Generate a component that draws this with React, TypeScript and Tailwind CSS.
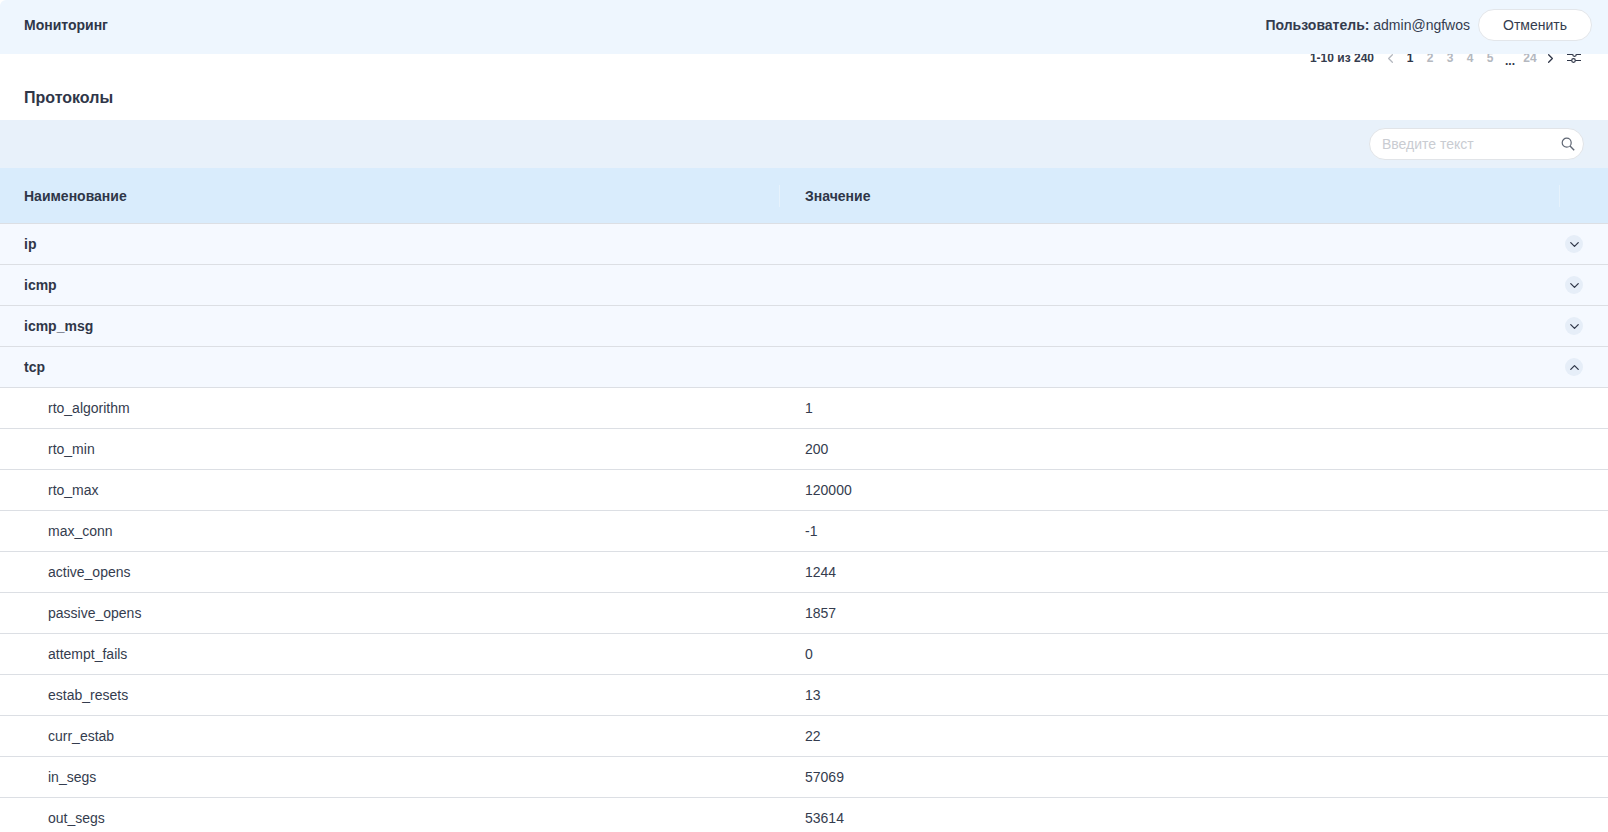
import { ChevronDown, ChevronLeft, ChevronRight, ChevronUp } from "lucide-react";

const groups = ["ip", "icmp", "icmp_msg"];

const tcpRows = [
  ["rto_algorithm", "1"],
  ["rto_min", "200"],
  ["rto_max", "120000"],
  ["max_conn", "-1"],
  ["active_opens", "1244"],
  ["passive_opens", "1857"],
  ["attempt_fails", "0"],
  ["estab_resets", "13"],
  ["curr_estab", "22"],
  ["in_segs", "57069"],
  ["out_segs", "53614"],
];

const GroupRow = ({ name, open }: { name: string; open?: boolean }) => (
  <div className="flex h-[41px] items-center justify-between border-b border-[#dcdfe4] bg-[#f5f9ff] pl-6 pr-[25px]">
    <span className="text-sm font-bold text-[#2f3648]">{name}</span>
    <span className="flex h-[18px] w-[18px] items-center justify-center rounded-full bg-[#e6eef8] text-[#2f3648]">
      {open ? <ChevronUp size={15} strokeWidth={2} /> : <ChevronDown size={15} strokeWidth={2} />}
    </span>
  </div>
);

const App = () => {
  return (
    <div className="h-[832px] w-[1608px] overflow-hidden bg-white font-['Liberation_Sans',sans-serif] text-sm text-[#343c4e]">
      <header className="relative z-10 flex h-[54px] items-center justify-between rounded-tl-md bg-[#eef6fe] pb-[4px] pl-6 pr-4">
        <span className="text-sm font-bold text-[#2f3648]">Мониторинг</span>
        <div className="flex items-center gap-2">
          <span>
            <b>Пользователь:</b> admin@ngfwos
          </span>
          <button className="h-[32px] w-[114px] rounded-full border border-[#e3e6ea] bg-white text-sm">Отменить</button>
        </div>
      </header>

      <div className="flex h-[8px] items-center justify-end pr-[27px] text-xs font-bold">
        <span className="mr-[6px]">1-10 из 240</span>
        <span className="flex w-[20px] justify-center">
          <ChevronLeft size={15} className="text-[#b4b8bf]" />
        </span>
        <div className="flex items-center text-[#b4b8bf]">
          <span className="w-[20px] text-center text-[#2f3648]">1</span>
          <span className="w-[20px] text-center">2</span>
          <span className="w-[20px] text-center">3</span>
          <span className="w-[20px] text-center">4</span>
          <span className="w-[20px] text-center">5</span>
          <span className="mt-[6px] w-[20px] text-center text-[#2f3648]">...</span>
          <span className="w-[20px] text-center">24</span>
        </div>
        <span className="flex w-[20px] justify-center">
          <ChevronRight size={15} className="text-[#2f3648]" />
        </span>
        <svg width="14" height="14" viewBox="0 0 14 14" fill="none" stroke="#2f3648" strokeWidth="1.2" className="ml-[7px]">
          <path d="M0 3.5h5.5M9.5 3.5H14M0 9.5h4.5M8.5 9.5H14" />
          <circle cx="7.5" cy="3.5" r="1.8" />
          <circle cx="6.5" cy="9.5" r="1.8" />
        </svg>
      </div>

      <div className="flex h-[58px] items-center pl-6 pt-[14px] text-base font-bold text-[#2f3648]">Протоколы</div>

      <div className="flex h-[48px] items-center justify-end bg-[#e8f1fa] pr-6">
        <div className="flex h-[32px] w-[215px] items-center justify-between rounded-full border border-[#e1e4e8] bg-white pl-3 pr-[8px]">
          <span className="text-[#c9ccd2]">Введите текст</span>
          <svg width="14" height="14" viewBox="0 0 14 14" fill="none" stroke="#5f6673" strokeWidth="1.2">
            <circle cx="5.7" cy="5.7" r="4.5" />
            <path d="M9 9l4.2 4.2" strokeWidth="1.4" />
          </svg>
        </div>
      </div>

      <div className="flex h-[56px] items-center border-b border-[#dcdfe4] bg-[#d9ecfc] font-bold text-[#2f3648]">
        <div className="flex h-[22px] w-[780px] items-center border-r border-[#e6f2fc] pl-6">Наименование</div>
        <div className="flex h-[22px] flex-1 items-center pl-[25px]">Значение</div>
        <div className="h-[22px] w-[49px] border-l border-[#e6f2fc]" />
      </div>

      {groups.map((g) => (
        <GroupRow key={g} name={g} />
      ))}
      <GroupRow name="tcp" open />

      {tcpRows.map(([name, value]) => (
        <div key={name} className="flex h-[41px] items-center border-b border-[#dcdfe4] bg-white">
          <div className="w-[781px] pl-12">{name}</div>
          <div className="pl-6">{value}</div>
        </div>
      ))}
    </div>
  );
};

export default App;
